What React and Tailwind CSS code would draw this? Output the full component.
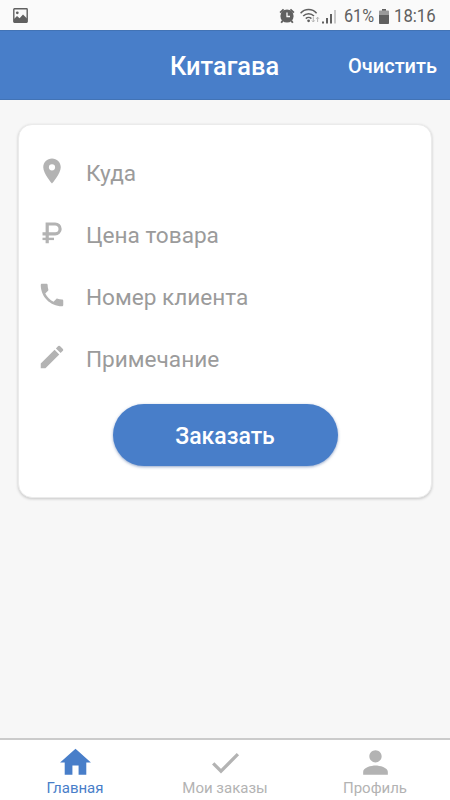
import { MdEdit, MdHome, MdPerson, MdPhone, MdPlace } from 'react-icons/md'

function RubleIcon({ className }) {
  return (
    <svg className={className} viewBox="0 0 30 30" fill="none" stroke="currentColor" strokeWidth="3.2">
      <path d="M10.2 25.2V6H18.2a4.9 4.9 0 0 1 0 9.8H5.5" />
      <path d="M5.5 20.9H17" strokeWidth="2.4" />
    </svg>
  )
}

function CheckIcon({ className }) {
  return (
    <svg className={className} viewBox="0 0 37 37" fill="none" stroke="currentColor" strokeWidth="3.3">
      <path d="M6.2 19.4l7.8 7.7L30.9 10.2" />
    </svg>
  )
}

function StatusBar() {
  return (
    <div className="h-[30px] bg-[#fafafa] flex items-center justify-between pl-[13px] pr-3.5 text-[#606060]">
      <svg className="w-[15px] h-[15px]" viewBox="0 0 15 15">
        <rect x="0.8" y="0.8" width="13.4" height="13.4" rx="0.6" fill="none" stroke="currentColor" strokeWidth="1.4" />
        <path d="M1 14V11l3-3 2.6 2.2L10 6.5l4 4V14z" fill="currentColor" />
        <circle cx="4.3" cy="4.8" r="1.4" fill="currentColor" />
      </svg>
      <div className="flex items-center mt-0.5">
        <svg className="w-4 h-4" viewBox="0 0 16 16">
          <circle cx="8" cy="8" r="6.6" fill="currentColor" />
          <path d="M1.1 4.6l3.5-3.3M14.9 4.6l-3.5-3.3M3.8 12.6l-1.6 2.2M12.2 12.6l1.6 2.2" stroke="currentColor" strokeWidth="1.8" />
          <path d="M8 4.5v4h3" fill="none" stroke="#fafafa" strokeWidth="1.3" />
        </svg>
        <svg className="w-5 h-4 ml-[5px]" viewBox="0 0 20 16" fill="none" stroke="currentColor" strokeWidth="1.5">
          <path d="M.6 5.2a10.5 10.5 0 0 1 16 0M3.2 8a7.4 7.4 0 0 1 10.8 0M5.8 10.6a4 4 0 0 1 5.6 0" />
          <circle cx="8.6" cy="12.8" r="1.4" fill="currentColor" stroke="none" />
          <path d="M13.3 9v5M11.9 12.4l1.4 1.6 1.4-1.6M17.6 14V9.2M16.2 10.8l1.4-1.6 1.4 1.6" stroke="#b5b5b5" strokeWidth="1" />
        </svg>
        <svg className="w-4 h-[15px] ml-0.5" viewBox="0 0 16 15" fill="currentColor">
          <rect x="0" y="12.5" width="2" height="2" />
          <rect x="4" y="9" width="2" height="5.5" />
          <rect x="8" y="5" width="2" height="9.5" />
          <rect x="12" y="1" width="2" height="13.5" fill="#c9c9c9" />
        </svg>
        <span className="ml-1.5 w-[31px] text-lg leading-none whitespace-nowrap origin-left scale-x-[0.9]">61%</span>
        <svg className="w-2.5 h-[15px] ml-1" viewBox="0 0 10 15" fill="currentColor">
          <path d="M3 0h4v1.6h2.2q.8 0 .8.8v4H0v-4q0-.8.8-.8H3z" fill="#9a9a9a" />
          <path d="M3 0h4v1.6H3zM0 6h10v8.2q0 .8-.8.8H.8q-.8 0-.8-.8z" />
        </svg>
        <span className="ml-[5px] w-[42px] text-lg leading-none whitespace-nowrap origin-left scale-x-[0.93]">18:16</span>
      </div>
    </div>
  )
}

const fields = [
  { label: 'Куда', icon: MdPlace },
  { label: 'Цена товара', icon: RubleIcon },
  { label: 'Номер клиента', icon: MdPhone },
  { label: 'Примечание', icon: MdEdit },
]

const tabs = [
  { label: 'Главная', icon: MdHome, active: true },
  { label: 'Мои заказы', icon: CheckIcon },
  { label: 'Профиль', icon: MdPerson },
]

export default function App() {
  return (
    <div className="w-full h-screen flex flex-col overflow-hidden bg-[#f7f7f7] font-['Roboto',sans-serif]">
      <StatusBar />

      <header className="h-[70px] bg-[#487ec9] border-y border-[#4273b5] text-white font-medium grid grid-cols-[1fr_auto_1fr] items-center pr-[13px]">
        <span />
        <h1 className="text-[25.4px] leading-none pl-3 pt-1">Китагава</h1>
        <button className="justify-self-end text-xl leading-none pt-0.5">Очистить</button>
      </header>

      <main className="flex-1 px-[18px] pt-6">
        <div className="h-[374px] bg-white rounded-[14px] border border-[#ebebeb] shadow-[0_1px_3px_rgba(0,0,0,0.2)] pt-[15px] px-[18px]">
          {fields.map(({ label, icon: Icon }) => (
            <div key={label} className="h-[62px] flex items-center">
              <Icon className="w-[30px] h-[30px] text-[#b3b3b3]" />
              <span className="ml-[19px] pt-1.5 text-[22.6px] leading-none text-[#9b9b9b]">{label}</span>
            </div>
          ))}
          <button className="block mx-auto mt-4 w-[225px] h-[62px] rounded-full bg-[#487ec9] text-white text-[23px] font-medium pt-1 shadow-[0_1px_3px_rgba(40,80,150,0.5)]">
            Заказать
          </button>
        </div>
      </main>

      <nav className="h-[62px] bg-white border-t-2 border-[#cbcbcb] grid grid-cols-3">
        {tabs.map(({ label, icon: Icon, active }) => (
          <button
            key={label}
            className={`flex flex-col items-center pt-1 ${active ? 'text-[#487ec9]' : 'text-[#b3b3b3]'}`}
          >
            <Icon className="w-[37px] h-[37px]" />
            <span className="text-[15px] leading-none">{label}</span>
          </button>
        ))}
      </nav>
    </div>
  )
}
